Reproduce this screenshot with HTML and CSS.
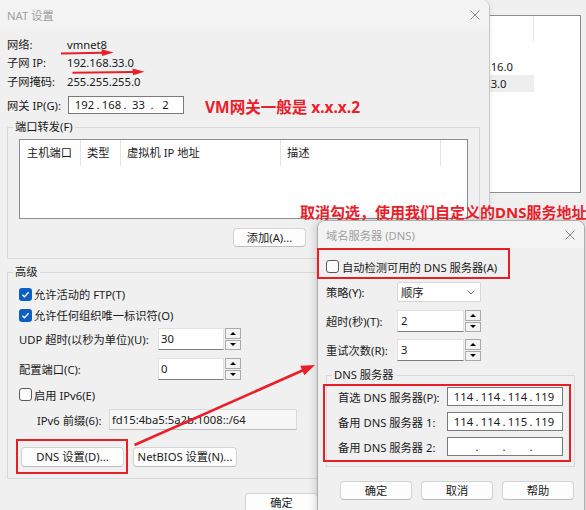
FILE: index.html
```html
<!DOCTYPE html>
<html lang="zh-CN">
<head>
<meta charset="utf-8">
<title>NAT 设置</title>
<link rel="stylesheet" href="styles.css">
</head>
<body>
<div class="desk">

  <div class="win back">
    <div class="back-list">
      <div class="back-head"><span class="bc-a"></span><span class="bc-b"></span></div>
      <div class="back-row"><span class="bc-a"></span><span class="bc-b"></span></div>
      <div class="back-row"><span class="bc-a"></span><span class="bc-b">192.168.16.0</span></div>
      <div class="back-row sel"><span class="bc-a"></span><span class="bc-b">192.168.3.0</span></div>
    </div>
  </div>

  <section class="win nat">
    <header class="titlebar">
      <span class="title">NAT 设置</span>
      <svg class="close" width="10" height="10" viewBox="0 0 10 10"><path d="M0.5 0.5L9.5 9.5M9.5 0.5L0.5 9.5" stroke="#8a8a8a" stroke-width="1"/></svg>
    </header>
    <div class="nat-body">
      <div class="info">
        <span>网络:</span><span>vmnet8</span>
        <span>子网 IP:</span><span>192.168.33.0</span>
        <span>子网掩码:</span><span>255.255.255.0</span>
      </div>
      <div class="gw-row">
        <span class="gw-label">网关 IP(G):</span>
        <div class="ipbox"><span class="oct">192</span><span class="dot">.</span><span class="oct">168</span><span class="dot">.</span><span class="oct">33</span><span class="dot">.</span><span class="oct">2</span></div>
      </div>

      <fieldset class="group pf">
        <legend>端口转发(F)</legend>
        <div class="listview">
          <div class="lv-head">
            <span class="lv-col c1">主机端口</span>
            <span class="lv-col c2">类型</span>
            <span class="lv-col c3">虚拟机 IP 地址</span>
            <span class="lv-col c4">描述</span>
          </div>
        </div>
        <div class="btnrow">
          <button class="btn">添加(A)...</button>
          <button class="btn covered">移除(R)</button>
          <button class="btn covered">属性(P)</button>
        </div>
      </fieldset>

      <fieldset class="group adv">
        <legend>高级</legend>
        <div class="cbrow">
          <span class="cb on"><svg width="9" height="9" viewBox="0 0 9 9"><path d="M1.4 4.7L3.5 6.8L7.6 2.2" fill="none" stroke="#fff" stroke-width="1.3"/></svg></span>
          <span>允许活动的 FTP(T)</span>
        </div>
        <div class="cbrow">
          <span class="cb on"><svg width="9" height="9" viewBox="0 0 9 9"><path d="M1.4 4.7L3.5 6.8L7.6 2.2" fill="none" stroke="#fff" stroke-width="1.3"/></svg></span>
          <span>允许任何组织唯一标识符(O)</span>
        </div>
        <div class="field udp">
          <span class="flabel">UDP 超时(以秒为单位)(U):</span>
          <span class="tb">30</span>
          <span class="spin"><span class="sb up"></span><span class="sb down"></span></span>
        </div>
        <div class="field cfg">
          <span class="flabel">配置端口(C):</span>
          <span class="tb">0</span>
          <span class="spin"><span class="sb up"></span><span class="sb down"></span></span>
        </div>
        <div class="cbrow v6">
          <span class="cb off"></span>
          <span>启用 IPv6(E)</span>
        </div>
        <div class="field prefix">
          <span class="plabel">IPv6 前缀(6):</span>
          <span class="dis">fd15:4ba5:5a2b:1008::/64</span>
        </div>
        <div class="brow">
          <button class="btn w103">DNS 设置(D)...</button>
          <button class="btn w104">NetBIOS 设置(N)...</button>
        </div>
      </fieldset>

      <div class="dlgbtns">
        <button class="btn">确定</button>
        <button class="btn covered">取消</button>
        <button class="btn covered">帮助</button>
      </div>
    </div>
  </section>

  <section class="win dns">
    <header class="titlebar">
      <span class="title">域名服务器 (DNS)</span>
      <svg class="close" width="10" height="10" viewBox="0 0 10 10"><path d="M0.5 0.5L9.5 9.5M9.5 0.5L0.5 9.5" stroke="#8a8a8a" stroke-width="1"/></svg>
    </header>
    <div class="dns-body">
      <div class="cbrow dns-auto">
        <span class="cb off"></span>
        <span>自动检测可用的 DNS 服务器(A)</span>
      </div>
      <div class="dns-row r-policy">
        <span class="dl">策略(Y):</span>
        <span class="select"><span>顺序</span><svg width="8" height="5" viewBox="0 0 8 5"><path d="M0.5 0.5L4 4L7.5 0.5" fill="none" stroke="#6a6a6a" stroke-width="1"/></svg></span>
      </div>
      <div class="dns-row r-timeout">
        <span class="dl">超时(秒)(T):</span>
        <span class="tb">2</span>
        <span class="spin"><span class="sb up"></span><span class="sb down"></span></span>
      </div>
      <div class="dns-row r-retry">
        <span class="dl">重试次数(R):</span>
        <span class="tb">3</span>
        <span class="spin"><span class="sb up"></span><span class="sb down"></span></span>
      </div>
      <fieldset class="group srv">
        <legend>DNS 服务器</legend>
        <div class="srv-row">
          <span class="sl">首选 DNS 服务器(P):</span>
          <div class="ipbox"><span class="oct">114</span><span class="dot">.</span><span class="oct">114</span><span class="dot">.</span><span class="oct">114</span><span class="dot">.</span><span class="oct">119</span></div>
        </div>
        <div class="srv-row">
          <span class="sl">备用 DNS 服务器 1:</span>
          <div class="ipbox"><span class="oct">114</span><span class="dot">.</span><span class="oct">114</span><span class="dot">.</span><span class="oct">115</span><span class="dot">.</span><span class="oct">119</span></div>
        </div>
        <div class="srv-row">
          <span class="sl">备用 DNS 服务器 2:</span>
          <div class="ipbox"><span class="oct"></span><span class="dot">.</span><span class="oct"></span><span class="dot">.</span><span class="oct"></span><span class="dot">.</span><span class="oct"></span></div>
        </div>
      </fieldset>
      <div class="dns-btns">
        <button class="btn">确定</button>
        <button class="btn">取消</button>
        <button class="btn">帮助</button>
      </div>
    </div>
  </section>

  <div class="note n1">VM网关一般是 x.x.x.2</div>
  <div class="note n2">取消勾选，使用我们自定义的DNS服务地址</div>
  <div class="mark m1"></div>
  <div class="mark m2"></div>
  <div class="mark m3"></div>

  <svg class="arrows" width="586" height="510" viewBox="0 0 586 510">
    <g fill="#e8202a" stroke="#e8202a">
      <line x1="61" y1="53.5" x2="103" y2="52.8" stroke-width="2"/>
      <polygon points="113.5,52.5 101.5,49.3 102,56" stroke="none"/>
      <line x1="72.5" y1="72.8" x2="134" y2="71.9" stroke-width="2"/>
      <polygon points="144.5,71.7 132.5,68.4 133,75.2" stroke="none"/>
      <line x1="134.5" y1="445" x2="303" y2="370.3" stroke-width="2.6"/>
      <polygon points="315,365 300.2,365.8 304.4,375.3" stroke="none"/>
    </g>
  </svg>
</div>
</body>
</html>
```

FILE: styles.css
```css
* { box-sizing: border-box; }
html, body { margin: 0; padding: 0; }
body {
  width: 586px;
  height: 510px;
  overflow: hidden;
  font-family: "Noto Sans", "Noto Sans CJK SC", sans-serif;
  font-size: 11.25px;
  color: #1a1a1a;
  background: #f0f0f0;
}
.desk { position: relative; width: 586px; height: 510px; overflow: hidden; }

.win { position: absolute; background: #f0f0f0; overflow: hidden; }

/* background window on the right */
.back { left: 300px; top: 0; width: 300px; height: 510px; padding: 15px 0 0 20px; }
.back-list { width: 261px; height: 178px; background: #fff; border: 1px solid #8a8d94; }
.back-head { display: flex; height: 25px; }
.back-head span { border-right: 1px solid #e3e3e3; }
.back-row { display: flex; height: 17px; line-height: 17px; }
.back-row.sel { background: #eeeeee; width: 213px; }
.bc-a { width: 116px; }
.bc-b { width: 97px; padding-left: 9px; white-space: nowrap; }

/* title bars */
.titlebar { display: flex; align-items: center; height: 29px; background: #f3f3f3; padding-left: 7px; }
.title { color: #a0a0a0; }
.close { margin-left: auto; margin-right: 9px; flex: none; }

/* NAT dialog */
.nat {
  left: 0; top: 0; width: 490px; height: 540px;
  border-right: 1px solid #c6c6c6;
  border-top-right-radius: 8px;
  box-shadow: 0 0 6px rgba(0,0,0,0.08);
  z-index: 1;
}
.nat-body { padding: 0 9px 0 7px; }
.info { display: grid; grid-template-columns: 60px auto; line-height: 18.5px; padding-top: 6.75px; }
.gw-row { display: flex; align-items: center; margin-top: 4.75px; height: 18px; }
.gw-label { width: 61px; }

.ipbox {
  display: flex; align-items: center;
  width: 116px; height: 18px;
  background: #fff; border: 1px solid #7a7a7a;
  padding-left: 5px; line-height: 16px;
}
.oct { width: 21px; text-align: center; }
.dot { width: 6px; text-align: center; }

.group { margin: 0; border: 1px solid #d9d9d9; min-width: 0; }
.group legend { padding: 0 2px; margin-left: -6px; line-height: 16px; }

.pf { margin-top: 5px; padding: 4px 11px 11px 11px; }
.listview { height: 80px; background: #fff; border: 1px solid #8a8d94; }
.lv-head { display: flex; height: 26px; }
.lv-col { border-right: 1px solid #e5e5e5; padding-left: 6px; line-height: 26px; white-space: nowrap; }
.c1 { width: 61px; padding-left: 7px; }
.c2 { width: 40px; }
.c3 { width: 160px; }
.c4 { width: 160px; }

.btnrow { display: flex; justify-content: flex-end; gap: 8px; margin-top: 9px; }
.btn {
  width: 73px; height: 19px; padding: 0;
  font: inherit; color: #1a1a1a;
  background: #fdfdfd;
  border: 1px solid #d3d3d3; border-bottom-color: #bcbcbc;
  border-radius: 4px;
  line-height: 17px; white-space: nowrap;
}
/* buttons that lie under the DNS dialog in the capture */
.covered { visibility: hidden; }

.adv { margin-top: 5px; padding: 3.5px 11px 11px 11px; }
.cbrow { display: flex; align-items: center; gap: 2px; height: 21px; white-space: nowrap; }
.cb { width: 13px; height: 13px; border-radius: 3px; flex: none; display: flex; align-items: center; justify-content: center; }
.cb.on { background: #0b5fc0; }
.cb.off { border: 1px solid #5a5a5a; background: #fbfbfb; }

.field { display: flex; align-items: center; height: 22px; white-space: nowrap; }
.udp { margin-top: 2.5px; }
.cfg { margin-top: 8px; }
.v6 { margin-top: 4px; }
.flabel { width: 139px; }

.tb {
  width: 66px; height: 22px; flex: none;
  background: #fff;
  border: 1px solid #e2e2e2; border-bottom-color: #7c7c7c;
  padding-left: 2px; line-height: 19px;
}
.spin {
  display: flex; flex-direction: column; gap: 1px;
  width: 16px; height: 22px; margin-left: 1px; flex: none;
}
.sb {
  flex: 1; position: relative;
  border: 1px solid #a9a9a9; background: #f3f3f3;
  display: flex; align-items: center; justify-content: center;
}
.sb::after { content: ""; width: 0; height: 0; border-left: 3px solid transparent; border-right: 3px solid transparent; }
.sb.up::after { border-bottom: 3px solid #000; }
.sb.down::after { border-top: 3px solid #000; }

.prefix { margin-top: 4px; height: 21px; padding-left: 18px; }
.plabel { width: 72px; }
.dis {
  width: 188px; height: 21px;
  background: #f6f6f6;
  border: 1px solid #dadada; border-bottom-color: #bdbdbd;
  padding-left: 2px; line-height: 19px; color: #222;
}
.brow { display: flex; gap: 9px; margin-top: 17px; padding-left: 2px; }
.brow .btn { height: 20px; line-height: 18px; }
.w103 { width: 103px; }
.w104 { width: 104px; }

.dlgbtns { display: flex; justify-content: flex-end; gap: 8px; margin-top: 14px; }
.dlgbtns .btn { height: 20px; line-height: 18px; }

/* DNS dialog */
.dns {
  left: 317px; top: 220px; width: 268px; height: 300px;
  border: 1px solid #adadad;
  border-radius: 8px 8px 0 0;
  box-shadow: 0 0 10px rgba(0,0,0,0.22);
  z-index: 2;
}
.dns .titlebar { height: 27px; padding-left: 8px; }
.dns-body { padding: 0 8px; }
.dns-auto { margin-top: 8px; gap: 3px; }
.dns-row { display: flex; align-items: center; white-space: nowrap; }
.dl { width: 71px; }
.select {
  width: 84px; height: 20px;
  background: #fff; border: 1px solid #d6d6d6; border-radius: 2px;
  display: flex; align-items: center; justify-content: space-between;
  padding: 0 5px 0 3px;
}
.r-policy { margin-top: 5px; height: 20px; }
.r-timeout { margin-top: 8px; height: 22px; }
.r-retry { margin-top: 7px; height: 22px; }
.dns .tb { width: 67px; padding-left: 3px; }

.srv { margin-top: 6px; margin-right: 1px; padding: 4px 11px 10px 11px; }
.srv-row { display: flex; align-items: center; height: 19px; white-space: nowrap; }
.srv-row + .srv-row { margin-top: 6px; }
.srv .ipbox { height: 19px; }
.sl { width: 109px; }

.dns-btns { display: flex; justify-content: flex-end; gap: 9px; margin-top: 14px; padding-right: 2px; }
.dns-btns .btn { width: 72px; height: 19px; }

/* annotations */
.note { position: absolute; color: #e8202a; font-weight: 700; white-space: nowrap; line-height: 20px; z-index: 5; }
.n1 { left: 205px; top: 97px; font-size: 15.5px; }
.n2 { left: 300px; top: 202px; font-size: 15px; }
.mark { position: absolute; border: 2px solid #e51f27; z-index: 5; }
.m1 { left: 16px; top: 439px; width: 112px; height: 35px; }
.m2 { left: 317px; top: 248px; width: 193px; height: 31px; }
.m3 { left: 323px; top: 384px; width: 248px; height: 78px; }
.arrows { position: absolute; left: 0; top: 0; z-index: 6; }
```
